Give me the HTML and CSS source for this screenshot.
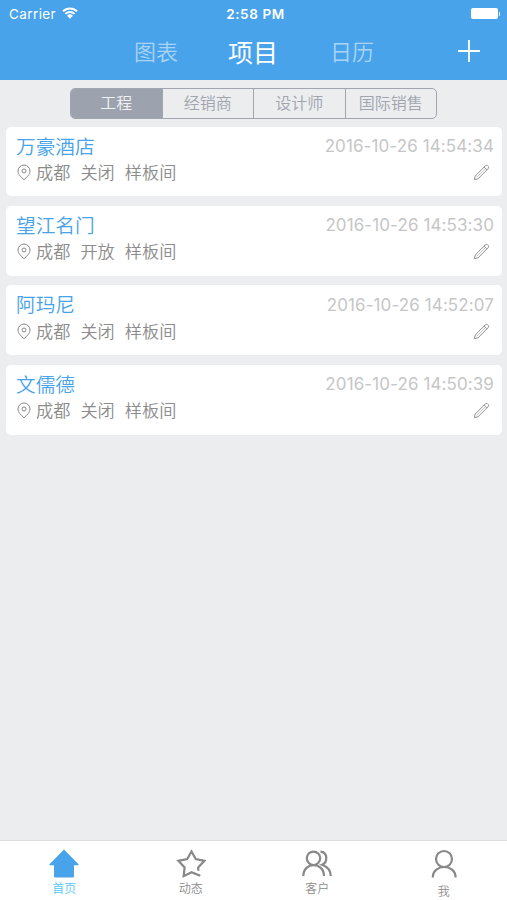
FILE: index.html
```html
<!DOCTYPE html>
<html lang="zh-CN">

<head>
  <meta charset="UTF-8">
  <meta name="viewport" content="width=device-width, initial-scale=1.0">
  <title>项目</title>
  <link rel="stylesheet" href="styles.css">
</head>

<body>
  <svg class="symbols">
    <symbol id="pin" viewBox="0 0 14 17">
      <path d="M7 1a6 6 0 0 0-6 6c0 3.400 3.200 6.200 6 8.700 2.800-2.500 6-5.300 6-8.700a6 6 0 0 0-6-6z" />
      <circle cx="7" cy="7" r="2" />
    </symbol>
    <symbol id="pencil" viewBox="0 0 18 18">
      <path d="M1.500 16.500l.8-3.700L13 2q1-1 2.100-.4l1.300 1.300q.6 1.100-.4 2.100L5.300 15.700zM11.800 3.300l2.900 2.900" />
      <path class="thin" d="M4 14L13.200 4.800" />
    </symbol>
  </svg>

  <div class="header">
    <div class="status">
      <div class="carrier">
        <span>Carrier</span>
        <svg class="wifi" viewBox="0 0 16 12">
          <path d="M1 4.300a10 10 0 0 1 14 0M3.400 6.900a6.500 6.500 0 0 1 9.200 0" />
          <path class="dot" d="M5.100 8.700a4.100 4.100 0 0 1 5.800 0L8 11.700z" />
        </svg>
      </div>
      <div class="time">2:58 PM</div>
      <div class="power"><span class="battery"></span><span class="cap"></span></div>
    </div>
    <div class="nav">
      <span class="nav-item">图表</span>
      <span class="nav-item active">项目</span>
      <span class="nav-item">日历</span>
      <svg class="plus" viewBox="0 0 22 22">
        <path d="M11 0v22M0 11h22" />
      </svg>
    </div>
  </div>

  <div class="main">
    <div class="segment">
      <span class="seg active">工程</span>
      <span class="seg">经销商</span>
      <span class="seg">设计师</span>
      <span class="seg">国际销售</span>
    </div>
    <div class="list">
      <div class="card">
        <div class="row">
          <span class="name">万豪酒店</span>
          <span class="date">2016-10-26 14:54:34</span>
        </div>
        <div class="row info">
          <svg class="pin"><use href="#pin" /></svg>
          <span>成都</span><span>关闭</span><span>样板间</span>
          <svg class="pencil"><use href="#pencil" /></svg>
        </div>
      </div>
      <div class="card">
        <div class="row">
          <span class="name">望江名门</span>
          <span class="date">2016-10-26 14:53:30</span>
        </div>
        <div class="row info">
          <svg class="pin"><use href="#pin" /></svg>
          <span>成都</span><span>开放</span><span>样板间</span>
          <svg class="pencil"><use href="#pencil" /></svg>
        </div>
      </div>
      <div class="card">
        <div class="row">
          <span class="name">阿玛尼</span>
          <span class="date">2016-10-26 14:52:07</span>
        </div>
        <div class="row info">
          <svg class="pin"><use href="#pin" /></svg>
          <span>成都</span><span>关闭</span><span>样板间</span>
          <svg class="pencil"><use href="#pencil" /></svg>
        </div>
      </div>
      <div class="card">
        <div class="row">
          <span class="name">文儒德</span>
          <span class="date">2016-10-26 14:50:39</span>
        </div>
        <div class="row info">
          <svg class="pin"><use href="#pin" /></svg>
          <span>成都</span><span>关闭</span><span>样板间</span>
          <svg class="pencil"><use href="#pencil" /></svg>
        </div>
      </div>
    </div>
  </div>

  <div class="tabbar">
    <div class="tab active">
      <svg class="tab-icon" viewBox="0 0 30 30">
        <path class="fill" d="M15 .5L29.500 15.300q.6 1-.6 1H25v11q0 1.300-1.300 1.300H6.300Q5 28.600 5 27.300v-11H1.100q-1.200 0-.6-1z" />
      </svg>
      <span>首页</span>
    </div>
    <div class="tab">
      <svg class="tab-icon" viewBox="0 0 30 30">
        <path d="M24.300 26.800L15.500 23.200l-7.800 4 .9-8.800-6.200-6.600 8.800-1.700 4.300-7.600 4.300 7.600 8.600 1.700-5.800 6.200q-.8.900-.4 2.100l.4 1.700" />
      </svg>
      <span>动态</span>
    </div>
    <div class="tab">
      <svg class="tab-icon" viewBox="0 0 30 30">
        <circle cx="11.500" cy="9.300" r="6.700" />
        <path d="M1.300 27c0-14.500 20.700-14.500 20.700 0M18.500 2.700c7.300.6 7.500 10.600 1.500 13.100 5.500 2 8.700 5.700 8.700 11.200" />
      </svg>
      <span>客户</span>
    </div>
    <div class="tab me">
      <svg class="tab-icon" viewBox="0 0 30 30">
        <circle cx="15" cy="10" r="8" />
        <path d="M3.800 28.500c0-14 22.800-14 22.800 0" />
      </svg>
      <span>我</span>
    </div>
  </div>
</body>

</html>
```

FILE: styles.css
```css
* {
  box-sizing: border-box;
}

body {
  margin: 0;
  height: 900px;
  display: flex;
  flex-direction: column;
  background-color: #ebedef;
  font-family: Inter, "Noto Sans CJK SC", sans-serif;
  font-weight: 350;
}

svg {
  fill: none;
  stroke: #888;
  flex: none;
}

.symbols {
  display: none;
}

.header {
  height: 79.500px;
  background-color: #48a3eb;
  color: #fff;
}

.status {
  height: 27px;
  display: flex;
  align-items: center;
  padding: 0 7px 0 9px;
  font-size: 13.500px;
  font-weight: 400;
}

.carrier,
.power {
  flex: 1;
  display: flex;
  align-items: center;
}

.carrier {
  gap: 6px;
  letter-spacing: .4px;
}

.wifi {
  width: 16px;
  height: 12px;
  margin-top: -2px;
  stroke: #fff;
  stroke-width: 1.900;
}

.wifi .dot {
  fill: #fff;
  stroke: none;
}

.time {
  padding-left: 2px;
  font-weight: 600;
  letter-spacing: .6px;
}

.power {
  justify-content: flex-end;
  gap: 1px;
}

.battery {
  width: 27px;
  height: 11px;
  border-radius: 2px;
  background-color: #fff;
}

.cap {
  width: 1.500px;
  height: 4px;
  border-radius: 0 2px 2px 0;
  background-color: #fff;
}

.nav {
  height: 50px;
  display: flex;
  align-items: center;
  padding-left: 134px;
}

.nav-item {
  width: 44px;
  font-size: 22px;
  line-height: 50px;
  color: #a9d4f6;
}

.nav-item.active {
  width: 50px;
  margin: 0 52px 0 50px;
  padding-top: 1px;
  font-size: 25px;
  font-weight: 400;
  color: #fff;
}

.plus {
  width: 22px;
  height: 22px;
  margin: -2px 0 0 84px;
  stroke: #fff;
  stroke-width: 1.800;
}

.main {
  flex: 1;
  padding: 8px 5px 0 6px;
}

.segment {
  display: flex;
  width: 367px;
  height: 31px;
  margin-left: 64px;
  border: 1px solid #a0a5b0;
  border-radius: 5px;
  overflow: hidden;
}

.seg {
  flex: 1;
  border-left: 1px solid #a0a5b0;
  text-align: center;
  font-size: 16px;
  line-height: 29px;
  color: #a0a4ad;
}

.seg:first-child {
  border-left: none;
}

.seg.active {
  background-color: #9ca2ae;
  color: #f0f1f3;
}

.list {
  display: flex;
  flex-direction: column;
  gap: 9.500px;
  margin-top: 8px;
}

.card {
  height: 69.900px;
  padding: 6px 8px 0 10px;
  background-color: #fff;
  border-radius: 5px;
}

.row {
  display: flex;
  align-items: center;
  height: 27px;
}

.name {
  flex: 1;
  font-size: 19.700px;
  line-height: 27px;
  padding-top: 2px;
  color: #48a3eb;
}

.date {
  font-size: 17px;
  font-weight: 400;
  letter-spacing: .1px;
  color: #c6c6c6;
}

.info {
  gap: 10px;
  font-size: 17.200px;
  line-height: 26px;
  color: #8c8c8c;
}

.pin {
  width: 14px;
  height: 17px;
  margin: -1px -5px 0 1px;
}

.pencil {
  width: 17px;
  height: 17px;
  margin: -1px 4px 0 auto;
}

.thin {
  stroke-width: .5;
}

.tabbar {
  height: 60px;
  display: flex;
  border-top: 1px solid #dcdddd;
  background-color: #fff;
}

.tab {
  flex: 1;
  display: flex;
  flex-direction: column;
  align-items: center;
  padding-top: 8px;
  font-size: 12px;
  line-height: 18px;
  color: #8c8c8c;
}

.tab-icon {
  width: 30px;
  height: 30px;
  margin-bottom: 1px;
  stroke-width: 2.200;
}

.tab.active {
  padding-left: 1px;
  color: #50c8fa;
}

.tab .fill {
  fill: #48a3eb;
  stroke: none;
}

.me .tab-icon {
  margin-bottom: 4px;
}
```
